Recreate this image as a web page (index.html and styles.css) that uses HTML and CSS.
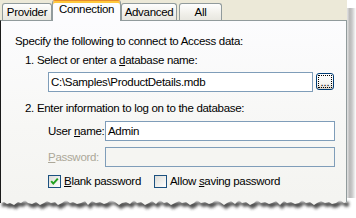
FILE: index.html
```html
<!DOCTYPE html>
<html>
<head>
<meta charset="utf-8">
<link rel="stylesheet" href="styles.css">
</head>
<body>
<div class="frame">
  <div class="main">
    <div class="dialog">
      <div class="tabs">
        <div class="tab t-provider">Provider</div>
        <div class="tab sel t-conn">Connection</div>
        <div class="tab t-adv">Advanced</div>
        <div class="tab t-all">All</div>
      </div>
      <div class="panel">
        <p class="line intro">Specify the following to connect to Access data:</p>
        <p class="line step s1">1. Select or enter a <u>d</u>atabase name:</p>
        <div class="row db">
          <div class="field wide">C:\Samples\ProductDetails.mdb</div>
          <div class="btn"><span class="focus">...</span></div>
        </div>
        <p class="line step s2">2. Enter information to log on to the database:</p>
        <div class="row cred user">
          <span class="lbl">User <u>n</u>ame:</span>
          <div class="field cfield">Admin</div>
        </div>
        <div class="row cred pass disabled">
          <span class="lbl"><u>P</u>assword:</span>
          <div class="field cfield"></div>
        </div>
        <div class="row checks">
          <div class="chk first">
            <span class="box"><svg width="11" height="11" viewBox="0 0 11 11"><path d="M2.2 5.2 L4.3 7.6 L8.8 2.6" fill="none" stroke="#21a121" stroke-width="2"/></svg></span>
            <span><u>B</u>lank password</span>
          </div>
          <div class="chk">
            <span class="box"></span>
            <span>Allow <u>s</u>aving password</span>
          </div>
        </div>
      </div>
    </div>
    <div class="rshadow"></div>
  </div>
  <svg class="torn" width="356" height="20" viewBox="0 0 356 20">
    <defs>
      <filter id="blur" x="-5%" y="-50%" width="110%" height="250%">
        <feGaussianBlur stdDeviation="1.6"/>
      </filter>
    </defs>
    <path transform="translate(2,4)" filter="url(#blur)" fill="#2e2e2e" opacity="0.85" d="M0,0 L0,5 L4,4 L7,6 L10,5 L14,7 L18,4 L21,5 L25,2 L28,5 L32,6 L36,4 L40,7 L44,5 L47,3 L51,5 L55,4 L58,7 L62,5 L66,2 L70,5 L73,4 L77,6 L81,5 L85,3 L88,7 L92,3 L96,5 L100,4 L104,6 L107,5 L111,2 L115,4 L119,7 L122,5 L126,4 L130,6 L134,2 L137,5 L141,4 L145,7 L149,5 L152,3 L156,6 L160,2 L164,5 L167,4 L171,7 L175,5 L179,3 L182,5 L186,4 L190,7 L194,5 L197,2 L201,5 L205,4 L209,6 L212,5 L216,2 L220,4 L224,7 L227,5 L231,3 L235,6 L239,2 L242,5 L246,4 L250,7 L254,5 L257,2 L261,5 L265,4 L269,6 L272,5 L276,3 L280,7 L284,3 L287,5 L291,4 L295,6 L299,5 L302,2 L306,5 L310,4 L314,7 L317,5 L321,3 L325,5 L329,4 L332,6 L336,5 L340,2 L344,5 L347,4 L347,0 Z"/>
    <path fill="#f4f4f1" d="M0,0 L0,5 L4,4 L7,6 L10,5 L14,7 L18,4 L21,5 L25,2 L28,5 L32,6 L36,4 L40,7 L44,5 L47,3 L51,5 L55,4 L58,7 L62,5 L66,2 L70,5 L73,4 L77,6 L81,5 L85,3 L88,7 L92,3 L96,5 L100,4 L104,6 L107,5 L111,2 L115,4 L119,7 L122,5 L126,4 L130,6 L134,2 L137,5 L141,4 L145,7 L149,5 L152,3 L156,6 L160,2 L164,5 L167,4 L171,7 L175,5 L179,3 L182,5 L186,4 L190,7 L194,5 L197,2 L201,5 L205,4 L209,6 L212,5 L216,2 L220,4 L224,7 L227,5 L231,3 L235,6 L239,2 L242,5 L246,4 L250,7 L254,5 L257,2 L261,5 L265,4 L269,6 L272,5 L276,3 L280,7 L284,3 L287,5 L291,4 L295,6 L299,5 L302,2 L306,5 L310,4 L314,7 L317,5 L321,3 L325,5 L329,4 L332,6 L336,5 L340,2 L344,5 L347,4 L347,0 Z"/>
    <path fill="none" stroke="#1a1a1a" stroke-width="1" d="M0.5,0 L0.5,5"/>
    <path fill="none" stroke="#919b9c" stroke-width="1" d="M346.5,0 L346.5,4"/>
  </svg>
</div>
</body>
</html>
```

FILE: styles.css
```css
html, body {
  margin: 0;
  padding: 0;
  background: #ffffff;
}

body {
  font-family: "Liberation Sans", Arial, sans-serif;
  font-size: 11.5px;
  letter-spacing: -0.3px;
  color: #000;
}

u {
  text-decoration: underline;
  text-underline-offset: 1px;
}

.frame {
  width: 356px;
  height: 218px;
  overflow: hidden;
  display: flex;
  flex-direction: column;
}

.main {
  display: flex;
}

.dialog {
  width: 347px;
  background: #ece9d8;
  display: flex;
  flex-direction: column;
}

.tabs {
  position: relative;
  z-index: 1;
  display: flex;
  align-items: flex-end;
  height: 20px;
  padding-left: 2px;
}

.tab {
  box-sizing: border-box;
  height: 17px;
  border: 1px solid #919b9c;
  border-bottom: 0;
  border-radius: 3px 3px 0 0;
  background: linear-gradient(#fefefe, #f1f0ea 60%, #e8e7e0);
  text-align: center;
  line-height: 16px;
  white-space: nowrap;
}

.t-provider { width: 50px; }
.t-conn { width: 69px; }
.t-adv { width: 56px; }
.t-all { width: 43px; margin-left: 2px; }

.tab.sel {
  height: 21px;
  margin-bottom: -1px;
  background: #fcfcfe;
  border-top: 1px solid #e68b2c;
  box-shadow: inset 0 2px 0 #ffc83c;
  line-height: 17px;
}

.panel {
  box-sizing: border-box;
  height: 178px;
  border: 1px solid #919b9c;
  border-left-color: #1a1a1a;
  border-bottom: 0;
  background: linear-gradient(#fcfcfe, #f7f7f5 60%, #f4f4f1);
  display: flex;
  flex-direction: column;
  padding-left: 14px;
}

.line {
  margin: 0;
  line-height: 13px;
  white-space: nowrap;
}

.intro { margin-top: 14px; }
.step { margin-left: 10px; }
.s1 { margin-top: 6px; }
.s2 { margin-top: 10px; }

.row {
  display: flex;
  align-items: flex-start;
  margin-left: 33px;
}

.db { margin-top: 5px; }

.field {
  box-sizing: border-box;
  height: 20px;
  border: 1px solid #7f9db9;
  background: #fff;
  padding: 0 2px;
  line-height: 18px;
  white-space: nowrap;
}

.wide { width: 265px; }

.btn {
  box-sizing: border-box;
  width: 18px;
  height: 17px;
  margin-left: 3px;
  margin-top: 1px;
  border: 1px solid #003c74;
  border-radius: 3px;
  background: linear-gradient(#ffffff, #f3f3ef 70%, #d6d0c5);
  padding: 1px;
  display: flex;
}

.focus {
  flex: 1;
  border: 1px dotted #000;
  font-size: 11px;
  letter-spacing: 0;
  display: flex;
  align-items: flex-end;
  justify-content: center;
  line-height: 10px;
}

.cred { margin-top: 6px; }

.lbl {
  flex: none;
  width: 57px;
  line-height: 20px;
  white-space: nowrap;
}

.cfield { width: 230px; }

.disabled .lbl { color: #aca899; }
.disabled .field { background: #f5f5f2; }

.checks {
  margin-top: 8px;
  align-items: center;
}

.chk {
  display: flex;
  align-items: center;
  line-height: 13px;
  white-space: nowrap;
}

.chk.first { width: 106px; }

.box {
  box-sizing: border-box;
  width: 13px;
  height: 13px;
  border: 1px solid #1c5180;
  background: linear-gradient(135deg, #dcdcd7, #ffffff);
  margin-right: 3px;
  display: flex;
}

.rshadow {
  width: 9px;
  margin-top: 8px;
  background: linear-gradient(to right, #e4e4e4 0, #b8b8b8 30%, #c8c8c8 55%, #ececec 85%, #ffffff 100%);
}

.torn {
  display: block;
}
```
